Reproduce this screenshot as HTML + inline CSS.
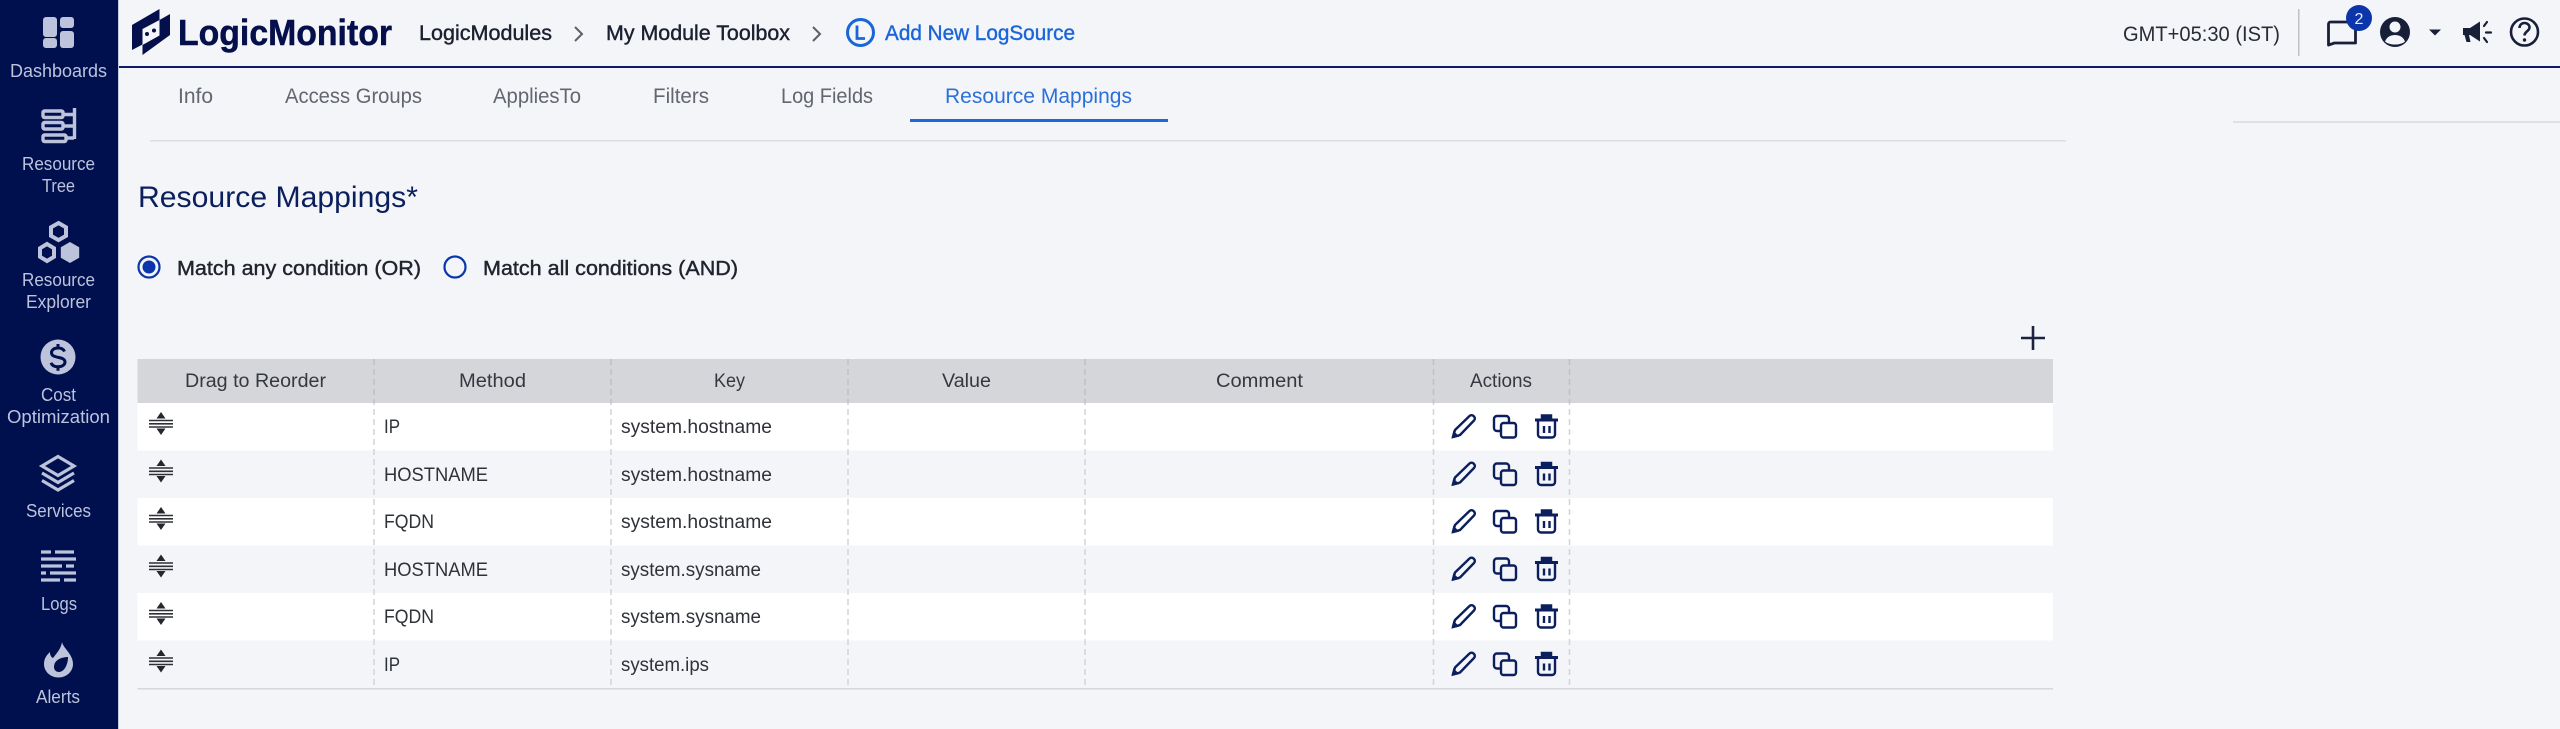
<!DOCTYPE html>
<html lang="en">
<head>
<meta charset="utf-8">
<title>Resource Mappings - LogicMonitor</title>
<style>
html,body{margin:0;padding:0;width:2560px;height:729px;overflow:hidden;background:#f4f5f8}
svg{display:block}
text{font-family:"Liberation Sans",sans-serif;white-space:pre}
.n text{fill:#bcc3da;font-size:18px}
.m{stroke-width:.4px;paint-order:stroke}
.h text{fill:#35383f;font-size:19px}
.c text{fill:#2f3238;font-size:19px}
.t text{fill:#62666f;font-size:21px}
</style>
</head>
<body>
<svg xmlns="http://www.w3.org/2000/svg" width="2560" height="729" viewBox="0 0 2560 729">
<defs>
<g id="drag">
<path d="M161 412l4.500 6.500h-9z M161 435l4.500-6.500h-9z" fill="#25272c"/>
<path d="M149 420.500h24M149 423.800h24M149 427h24" stroke="#2e3036" stroke-width="1.600" fill="none"/>
</g>
<g id="acts" fill="none" stroke="#0b1f5e" stroke-width="2.400">
<path d="M1453 437l2-7 14.500-14a2.800 2.800 0 0 1 4 0l.5.500a2.800 2.800 0 0 1 0 4L1460 435z" stroke-linejoin="round"/>
<path d="M1453 437l4-1-3-3z" fill="#0b1f5e"/>
<path d="M1500 431h-3a3 3 0 0 1-3-3v-9a3 3 0 0 1 3-3h9a3 3 0 0 1 3 3v4"/>
<rect x="1501" y="423" width="15" height="14.500" rx="2.500"/>
<path d="M1535 420h23" stroke-width="3"/>
<path d="M1542 419v-3.500h9v3.500" stroke-width="2.500" fill="#0b1f5e"/>
<path d="M1538 421v13.500a3 3 0 0 0 3 3h11a3 3 0 0 0 3-3V421"/>
<path d="M1544 426v7M1549.500 426v7" stroke-width="2.400"/>
</g>
</defs>

<rect width="2560" height="729" fill="#f4f5f8"/>

<!-- sidebar -->
<rect width="118" height="729" fill="#00104f"/>
<rect x="118" width="1" height="729" fill="#c5c9d8"/>
<g fill="#bcc3da">
<rect x="43" y="17" width="14" height="20" rx="3"/>
<rect x="60" y="17" width="14" height="11" rx="3"/>
<rect x="43" y="38" width="14" height="10" rx="3"/>
<rect x="60" y="31" width="14" height="17" rx="3"/>
</g>
<g fill="none" stroke="#bcc3da" stroke-width="3.400">
<rect x="43" y="111" width="20" height="6.500" rx="1.500"/>
<rect x="43" y="122.500" width="20" height="6.500" rx="1.500"/>
<rect x="43" y="135" width="23" height="6.500" rx="1.500"/>
<path d="M63 114.500h11M63 126h11M66 138h8M74.500 108v31"/>
<path d="M58.500 223l7.500 4.300v8.500l-7.500 4.300-7.500-4.300v-8.500z" stroke-width="4"/>
<path d="M47 244l7 4.200v8.600l-7 4.200-7-4.200v-8.600z" stroke-width="4"/>
</g>
<path d="M70 242l9.200 5.300v10.400L70 263l-9.200-5.300v-10.400z" fill="#bcc3da"/>
<circle cx="58" cy="357" r="17.500" fill="#bcc3da"/>
<path d="M64.500 351.500c-1-2.500-3.500-3.500-6.500-3.500-4 0-6.500 2-6.500 4.700 0 6.300 13.500 3 13.500 9.300 0 2.800-2.800 4.800-7 4.800-3.300 0-6-1.300-7-4M58 344v4M58 366.800v4" fill="none" stroke="#00104f" stroke-width="3"/>
<g fill="none" stroke="#bcc3da" stroke-width="3.200" stroke-linejoin="miter">
<path d="M58 456.500l16 9.500-16 9.500-16-9.500z"/>
<path d="M42 473l16 9.500 16-9.500M42 480.500l16 9.500 16-9.500"/>
</g>
<g fill="none" stroke="#bcc3da" stroke-width="3.200">
<path d="M41 552h10M55 552h19M41 559h35M41 566h21M66 566h8M41 573h5M50 573h26M41 580h19M64 580h12"/>
</g>
<path d="M62 642c1 6 11 12 11 22 0 8-7 13.500-14.500 13.500S44 672 44 664c0-6 3-9 6-12 0 3 1 5 3 6 3-4 8-9 9-16z" fill="#bcc3da"/>
<path d="M68 657c-5 0-14 2-14 10 0 3 2 5 5 5 5 0 9-7 9-15z" fill="#00104f"/>
<g class="n">
<text x="10" y="77" textLength="97" lengthAdjust="spacingAndGlyphs">Dashboards</text>
<text x="22" y="170" textLength="73" lengthAdjust="spacingAndGlyphs">Resource</text>
<text x="42" y="192" textLength="33" lengthAdjust="spacingAndGlyphs">Tree</text>
<text x="22" y="286" textLength="73" lengthAdjust="spacingAndGlyphs">Resource</text>
<text x="26" y="308" textLength="65" lengthAdjust="spacingAndGlyphs">Explorer</text>
<text x="41" y="401" textLength="35" lengthAdjust="spacingAndGlyphs">Cost</text>
<text x="7" y="423" textLength="103" lengthAdjust="spacingAndGlyphs">Optimization</text>
<text x="26" y="517" textLength="65" lengthAdjust="spacingAndGlyphs">Services</text>
<text x="41" y="610" textLength="36" lengthAdjust="spacingAndGlyphs">Logs</text>
<text x="36" y="703" textLength="44" lengthAdjust="spacingAndGlyphs">Alerts</text>
</g>

<!-- header -->
<rect x="119" y="66" width="2441" height="2" fill="#0c1c68"/>
<path d="M132 25L159.500 9v11l-17 9v15.500L132 50z" fill="#040f4b"/>
<path d="M170 14v21l-27.500 20V45l17-9.500V20z" fill="#040f4b"/>
<circle cx="147" cy="34" r="2" fill="#040f4b"/><circle cx="154" cy="30.500" r="2" fill="#040f4b"/>
<text x="178" y="45" font-size="36" font-weight="700" fill="#040f4b" stroke="#040f4b" stroke-width=".5" textLength="214" lengthAdjust="spacingAndGlyphs">LogicMonitor</text>

<g font-size="21" fill="#1a2030">
<text class="m" stroke="#1a2030" x="419" y="40" textLength="133" lengthAdjust="spacingAndGlyphs">LogicModules</text>
<text class="m" stroke="#1a2030" x="606" y="40" textLength="184" lengthAdjust="spacingAndGlyphs">My Module Toolbox</text>
</g>
<path d="M575 27l7 7-7 7M813 27l7 7-7 7" fill="none" stroke="#5b5f69" stroke-width="2"/>
<circle cx="860.500" cy="32.500" r="13" fill="none" stroke="#1a66d8" stroke-width="3"/>
<path d="M857 25.500v13h8" fill="none" stroke="#1a66d8" stroke-width="2.800"/>
<text class="m" stroke="#1a66d8" x="885" y="40" font-size="21" fill="#1a66d8" textLength="190" lengthAdjust="spacingAndGlyphs">Add New LogSource</text>

<text x="2123" y="41" font-size="21" fill="#282c36" textLength="157" lengthAdjust="spacingAndGlyphs">GMT+05:30 (IST)</text>
<rect x="2298" y="9" width="1.500" height="47" fill="#bfc1c7"/>
<path d="M2328.500 45V24a2 2 0 0 1 2-2h25v21h-21z" fill="none" stroke="#172038" stroke-width="2.800" stroke-linejoin="round"/>
<circle cx="2359" cy="18" r="13" fill="#0b35ab"/>
<text x="2354.500" y="24" font-size="16" fill="#e8ecf8">2</text>
<circle cx="2395" cy="32" r="15" fill="#172038"/>
<circle cx="2395" cy="27" r="5.500" fill="#f4f5f8"/>
<path d="M2385 41.500c2-5 6-6.500 10-6.500s8 1.500 10 6.500c-2.500 2-6 3-10 3s-7.500-1-10-3z" fill="#f4f5f8"/>
<path d="M2429 29.500h12l-6 6z" fill="#172038"/>
<path d="M2463 28h7l10-6.500v20l-10-6.500h-1l1.500 7h-4l-2-7h-1.500z" fill="#172038"/>
<path d="M2484 26l3-4M2486 32.500h5M2484 38l3 4" stroke="#172038" stroke-width="2.200" fill="none" stroke-linecap="round"/>
<circle cx="2524.500" cy="32" r="13.500" fill="none" stroke="#172038" stroke-width="2.600"/>
<path d="M2519.500 28c0-3 2.200-5 5-5s5 2 5 4.500c0 3.500-5 4-5 8" fill="none" stroke="#172038" stroke-width="2.600"/>
<circle cx="2524.500" cy="40" r="1.700" fill="#172038"/>
<rect x="2233" y="121" width="327" height="2" fill="#dfe0e5"/>

<!-- tabs -->
<g class="t">
<text x="178" y="103" textLength="35" lengthAdjust="spacingAndGlyphs">Info</text>
<text x="285" y="103" textLength="137" lengthAdjust="spacingAndGlyphs">Access Groups</text>
<text x="493" y="103" textLength="88" lengthAdjust="spacingAndGlyphs">AppliesTo</text>
<text x="653" y="103" textLength="56" lengthAdjust="spacingAndGlyphs">Filters</text>
<text x="781" y="103" textLength="92" lengthAdjust="spacingAndGlyphs">Log Fields</text>
</g>
<text x="945" y="103" font-size="21" fill="#2b70d8" textLength="187" lengthAdjust="spacingAndGlyphs">Resource Mappings</text>
<rect x="910" y="119" width="258" height="3" fill="#1e68d8"/>
<rect x="150" y="140" width="1916" height="1.500" fill="#dcdde3"/>

<!-- heading + radios -->
<text x="138" y="207" font-size="30" fill="#0b1f5c" textLength="280" lengthAdjust="spacingAndGlyphs">Resource Mappings*</text>
<circle cx="149" cy="267" r="10.500" fill="none" stroke="#0b35ab" stroke-width="2.200"/>
<circle cx="149" cy="267" r="6.500" fill="#0b35ab"/>
<text class="m" stroke="#20242e" x="177" y="275" font-size="20" fill="#20242e" textLength="244" lengthAdjust="spacingAndGlyphs">Match any condition (OR)</text>
<circle cx="455" cy="267" r="10.500" fill="none" stroke="#0b35ab" stroke-width="2.200"/>
<text class="m" stroke="#20242e" x="483" y="275" font-size="20" fill="#20242e" textLength="255" lengthAdjust="spacingAndGlyphs">Match all conditions (AND)</text>
<path d="M2033 326v24M2021 338h24" stroke="#1b2340" stroke-width="2.600" fill="none"/>

<!-- table -->
<rect x="137.500" y="359" width="1915.500" height="44" fill="#d4d6da"/>
<rect x="137.500" y="403" width="1915.500" height="47.500" fill="#fff"/>
<rect x="137.500" y="498" width="1915.500" height="47.500" fill="#fff"/>
<rect x="137.500" y="593" width="1915.500" height="47.500" fill="#fff"/>
<rect x="137.500" y="688" width="1915.500" height="1.500" fill="#d6d7db"/>
<g stroke="#d2d4d9" stroke-width="1.500" stroke-dasharray="6 4" fill="none">
<path d="M374 359v329M611 359v329M848 359v329M1085 359v329M1433.500 359v329M1569.500 359v329"/>
</g>
<g stroke="#bfc1c7" stroke-width="1.500" stroke-dasharray="6 4" fill="none">
<path d="M374 359v44M611 359v44M848 359v44M1085 359v44M1433.500 359v44M1569.500 359v44"/>
</g>
<g class="h">
<text x="185" y="387" textLength="141" lengthAdjust="spacingAndGlyphs">Drag to Reorder</text>
<text x="459" y="387" textLength="67" lengthAdjust="spacingAndGlyphs">Method</text>
<text x="714" y="387" textLength="31" lengthAdjust="spacingAndGlyphs">Key</text>
<text x="942" y="387" textLength="49" lengthAdjust="spacingAndGlyphs">Value</text>
<text x="1216" y="387" textLength="87" lengthAdjust="spacingAndGlyphs">Comment</text>
<text x="1470" y="387" textLength="62" lengthAdjust="spacingAndGlyphs">Actions</text>
</g>
<g class="c">
<text x="384" y="433" textLength="16" lengthAdjust="spacingAndGlyphs">IP</text>
<text x="621" y="433" textLength="151" lengthAdjust="spacingAndGlyphs">system.hostname</text>
<text x="384" y="481" textLength="104" lengthAdjust="spacingAndGlyphs">HOSTNAME</text>
<text x="621" y="481" textLength="151" lengthAdjust="spacingAndGlyphs">system.hostname</text>
<text x="384" y="528" textLength="50" lengthAdjust="spacingAndGlyphs">FQDN</text>
<text x="621" y="528" textLength="151" lengthAdjust="spacingAndGlyphs">system.hostname</text>
<text x="384" y="576" textLength="104" lengthAdjust="spacingAndGlyphs">HOSTNAME</text>
<text x="621" y="576" textLength="140" lengthAdjust="spacingAndGlyphs">system.sysname</text>
<text x="384" y="623" textLength="50" lengthAdjust="spacingAndGlyphs">FQDN</text>
<text x="621" y="623" textLength="140" lengthAdjust="spacingAndGlyphs">system.sysname</text>
<text x="384" y="671" textLength="16" lengthAdjust="spacingAndGlyphs">IP</text>
<text x="621" y="671" textLength="88" lengthAdjust="spacingAndGlyphs">system.ips</text>
</g>
<use href="#drag"/><use href="#drag" y="47.500"/><use href="#drag" y="95"/><use href="#drag" y="142.500"/><use href="#drag" y="190"/><use href="#drag" y="237.500"/>
<use href="#acts"/><use href="#acts" y="47.500"/><use href="#acts" y="95"/><use href="#acts" y="142.500"/><use href="#acts" y="190"/><use href="#acts" y="237.500"/>
</svg>
</body>
</html>
